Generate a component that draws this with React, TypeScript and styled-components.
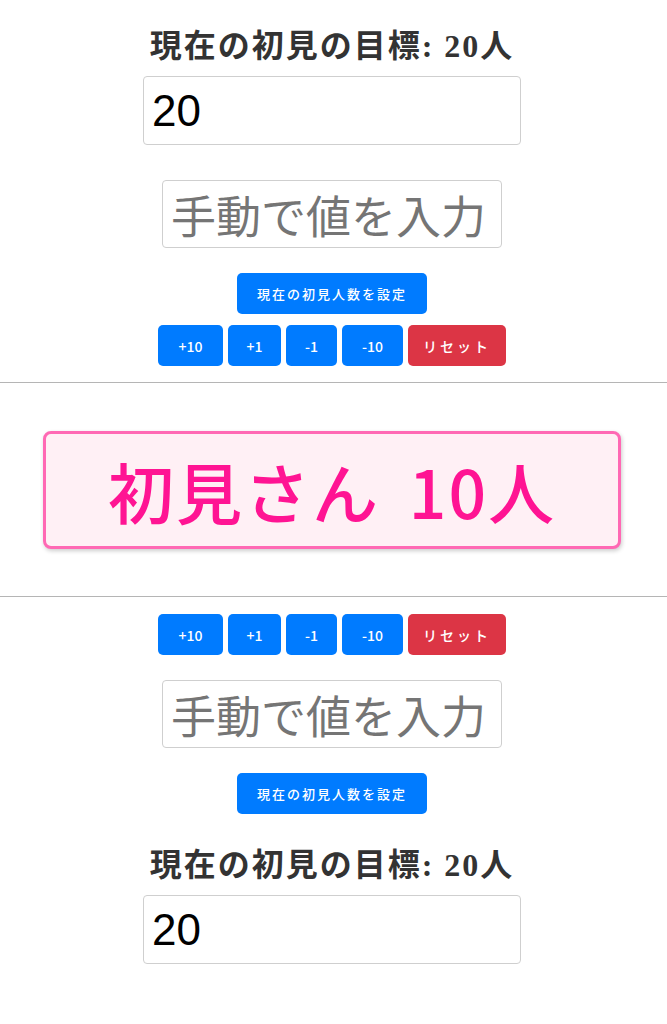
import React from "react";
import styled, { createGlobalStyle } from "styled-components";

const Global = createGlobalStyle`
  html, body { margin: 0; padding: 0; background: #ffffff; }
  body { font-family: "Noto Sans CJK JP", "Noto Sans", sans-serif; }
  * { box-sizing: border-box; }
`;

const Page = styled.div`
  display: flex;
  flex-direction: column;
  align-items: stretch;
  width: 667px;
`;

const Section = styled.section`
  display: flex;
  flex-direction: column;
  align-items: center;
  padding-right: 3px;
`;

const Heading = styled.h2<{ $mt: number }>`
  margin: ${(p) => p.$mt}px 0 0;
  font-family: "Liberation Serif", "Noto Sans CJK JP", serif;
  font-size: 32px;
  line-height: 36px;
  font-weight: 700;
  color: #333333;
  letter-spacing: 2px;
  white-space: nowrap;
`;

const Field = styled.input<{ $w: number; $mt: number }>`
  display: block;
  width: ${(p) => p.$w}px;
  height: 69px;
  margin-top: ${(p) => p.$mt}px;
  padding: 0 8px;
  border: 1px solid #cfcfcf;
  border-radius: 4px;
  background: #ffffff;
  font-family: "Liberation Sans", Arial, sans-serif;
  font-size: 44px;
  color: #000000;
  outline: none;
  &::placeholder {
    font-family: "Noto Sans CJK JP", sans-serif;
    color: #757575;
    opacity: 1;
  }
`;

const ManualField = styled(Field)`
  height: 68px;
  font-family: "Noto Sans CJK JP", sans-serif;
  font-size: 45px;
`;

const Button = styled.button<{ $w: number; $danger?: boolean }>`
  width: ${(p) => p.$w}px;
  height: 41px;
  border: none;
  border-radius: 5px;
  background: ${(p) => (p.$danger ? "#dc3545" : "#007bff")};
  color: #ffffff;
  font-family: "Noto Sans CJK JP", "Noto Sans", sans-serif;
  font-size: 14px;
  font-weight: 500;
  padding: 0;
  cursor: pointer;
  letter-spacing: ${(p) => (p.$danger ? "3px" : "0")};
`;

const SetButton = styled(Button)<{ $mt: number }>`
  margin-top: ${(p) => p.$mt}px;
  font-size: 13px;
  letter-spacing: 2px;
`;

const ButtonRow = styled.div<{ $mt: number }>`
  display: flex;
  gap: 5px;
  margin-top: ${(p) => p.$mt}px;
`;

const Rule = styled.hr<{ $mt: number }>`
  width: 100%;
  margin: ${(p) => p.$mt}px 0 0;
  border: none;
  border-top: 1px solid #b5b5b5;
`;

const CounterBox = styled.div`
  width: 578px;
  height: 118px;
  margin: 48px 0 0 43px;
  border: 3px solid #ff69b4;
  border-radius: 8px;
  background: #fff0f5;
  box-shadow: 1px 2px 4px rgba(0, 0, 0, 0.2);
  display: flex;
  align-items: center;
  justify-content: center;
  font-family: "Noto Sans CJK JP", sans-serif;
  font-size: 66px;
  font-weight: 500;
  color: #ff1493;
  letter-spacing: 2px;
  word-spacing: 12px;
`;

const Steps = ({ mt }: { mt: number }) => (
  <ButtonRow $mt={mt}>
    <Button $w={65}>+10</Button>
    <Button $w={53}>+1</Button>
    <Button $w={51}>-1</Button>
    <Button $w={61}>-10</Button>
    <Button $w={98} $danger>リセット</Button>
  </ButtonRow>
);

export default function App() {
  return (
    <Page>
      <Global />
      <Section>
        <Heading $mt={28}>現在の初見の目標: 20人</Heading>
        <Field $w={378} $mt={12} defaultValue="20" />
        <ManualField $w={340} $mt={35} placeholder="手動で値を入力" />
        <SetButton $w={190} $mt={25}>現在の初見人数を設定</SetButton>
        <Steps mt={11} />
      </Section>
      <Rule $mt={16} />
      <CounterBox>初見さん 10人</CounterBox>
      <Rule $mt={47} />
      <Section>
        <Steps mt={17} />
        <ManualField $w={340} $mt={25} placeholder="手動で値を入力" />
        <SetButton $w={190} $mt={25}>現在の初見人数を設定</SetButton>
        <Heading $mt={33}>現在の初見の目標: 20人</Heading>
        <Field $w={378} $mt={12} defaultValue="20" />
      </Section>
    </Page>
  );
}
